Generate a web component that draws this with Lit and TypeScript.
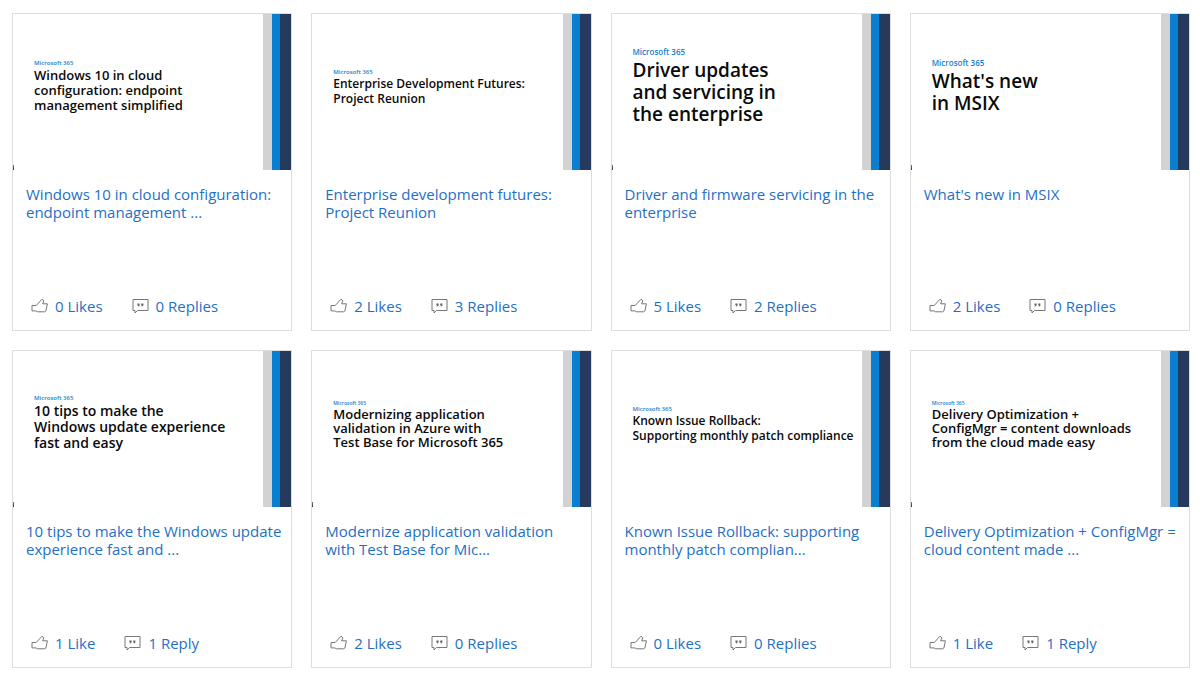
import { LitElement, html, css, svg } from "lit";
import { customElement, property } from "lit/decorators.js";

interface Session {
  heading: string;
  size: string;
  title: string;
  likes: number;
  replies: number;
  mark: boolean;
}

const sessions: Session[] = [
  { heading: "Windows 10 in cloud\nconfiguration: endpoint\nmanagement simplified", size: "m", title: "Windows 10 in cloud configuration: endpoint management ...", likes: 0, replies: 0, mark: true },
  { heading: "Enterprise Development Futures:\nProject Reunion", size: "s", title: "Enterprise development futures: Project Reunion", likes: 2, replies: 3, mark: false },
  { heading: "Driver updates\nand servicing in\nthe enterprise", size: "xl", title: "Driver and firmware servicing in the enterprise", likes: 5, replies: 2, mark: true },
  { heading: "What's new\nin MSIX", size: "xl", title: "What's new in MSIX", likes: 2, replies: 0, mark: true },
  { heading: "10 tips to make the\nWindows update experience\nfast and easy", size: "l", title: "10 tips to make the Windows update experience fast and ...", likes: 1, replies: 1, mark: true },
  { heading: "Modernizing application\nvalidation in Azure with\nTest Base for Microsoft 365", size: "sm", title: "Modernize application validation with Test Base for Mic...", likes: 2, replies: 0, mark: true },
  { heading: "Known Issue Rollback:\nSupporting monthly patch compliance", size: "s", title: "Known Issue Rollback: supporting monthly patch complian...", likes: 0, replies: 0, mark: false },
  { heading: "Delivery Optimization +\nConfigMgr = content downloads\nfrom the cloud made easy", size: "sm", title: "Delivery Optimization + ConfigMgr = cloud content made ...", likes: 1, replies: 1, mark: true },
];

const likeIcon = svg`<path d="M1 7.5H5.2L11 1.2L12.9 2.8L11.6 5.8H16.4L14.9 13L13.6 13.8H6.6L4.8 12.9H1Z"/>`;
const replyIcon = svg`<path d="M1 1.5H16V12.5H5.5L3 15V12.5H1Z"/><path class="dots" d="M5.4 5.4H7.6V7.4L6.4 8.6H5.8L6.2 7.4H5.4ZM9.2 5.4H11.4V7.4L10.2 8.6H9.6L10 7.4H9.2Z"/>`;

@customElement("session-card")
export class SessionCard extends LitElement {
  @property({ attribute: false }) session!: Session;

  static styles = css`
    :host {
      display: flex;
      flex-direction: column;
      min-width: 0;
      box-sizing: border-box;
      border: 1px solid #dedede;
      background: #fff;
    }
    .slide {
      display: flex;
      aspect-ratio: 278 / 156;
      text-decoration: none;
    }
    .slide.mark {
      background: linear-gradient(#777, #333) left bottom / 1px 5px no-repeat;
    }
    .words {
      flex: 1;
      display: flex;
      flex-direction: column;
      justify-content: center;
      padding: 0 0 14px 21px;
      white-space: pre;
    }
    .s .words, .sm .words { padding-bottom: 10px; }
    .brand { color: #0f7fd0; font-weight: 600; }
    .heading { color: #0a0a0a; font-weight: 600; }
    .s .brand { font-size: 6px; line-height: 8px; }
    .s .heading { font-size: 12px; line-height: 15px; }
    .sm .brand { font-size: 5px; line-height: 8px; }
    .sm .heading { font-size: 13px; line-height: 14px; }
    .m .brand { font-size: 6px; line-height: 10px; }
    .m .heading { font-size: 13px; line-height: 15px; }
    .l .brand { font-size: 6px; line-height: 10px; }
    .l .heading { font-size: 14px; line-height: 16px; }
    .xl .brand { font-size: 8px; line-height: 14px; }
    .xl .heading { font-size: 19px; line-height: 22px; }
    .stripes { display: grid; grid-template-columns: 9px 8px 11px; }
    .grey { background: #d2d2d2; }
    .blue { background: #0a7fd2; }
    .navy { background: #263a5e; }
    .body {
      flex: 1;
      display: flex;
      flex-direction: column;
      justify-content: space-between;
      gap: 24px;
      min-height: 160px;
      box-sizing: border-box;
      padding: 15px 4px 13px 13px;
    }
    a, button { color: #1f6fc5; }
    .title {
      font-size: 15px;
      line-height: 18px;
      text-decoration: none;
    }
    .stats { display: flex; gap: 29px; padding-left: 5px; }
    .stat {
      display: flex;
      align-items: center;
      gap: 7px;
      padding: 0;
      border: 0;
      background: none;
      font: inherit;
      font-size: 15px;
      line-height: 22px;
      text-decoration: none;
    }
    .stat svg {
      width: 17px;
      height: 17px;
      fill: none;
      stroke: #777;
      stroke-width: 1;
    }
    .stat .dots { fill: #666; stroke: none; }
  `;

  render() {
    const s = this.session;
    return html`
      <a class="slide ${s.size} ${s.mark ? "mark" : ""}" href="#">
        <div class="words">
          <div class="brand">Microsoft 365</div>
          <div class="heading">${s.heading}</div>
        </div>
        <div class="stripes"><span class="grey"></span><span class="blue"></span><span class="navy"></span></div>
      </a>
      <div class="body">
        <a class="title" href="#">${s.title}</a>
        <div class="stats">
          <button class="stat"><svg viewBox="0 0 17 17" aria-hidden="true">${likeIcon}</svg>${s.likes} ${s.likes === 1 ? "Like" : "Likes"}</button>
          <a class="stat" href="#"><svg viewBox="0 0 17 17" aria-hidden="true">${replyIcon}</svg>${s.replies} ${s.replies === 1 ? "Reply" : "Replies"}</a>
        </div>
      </div>
    `;
  }
}

@customElement("app-root")
export class AppRoot extends LitElement {
  static styles = css`
    :host {
      display: block;
      background: #fff;
      font-family: "Open Sans", "Noto Sans", sans-serif;
    }
    .grid {
      display: grid;
      grid-template-columns: repeat(4, minmax(0, 1fr));
      gap: 19px;
      padding: 13px 10px 6px 12px;
    }
  `;

  render() {
    return html`<main class="grid">${sessions.map((s) => html`<session-card .session=${s}></session-card>`)}</main>`;
  }
}
